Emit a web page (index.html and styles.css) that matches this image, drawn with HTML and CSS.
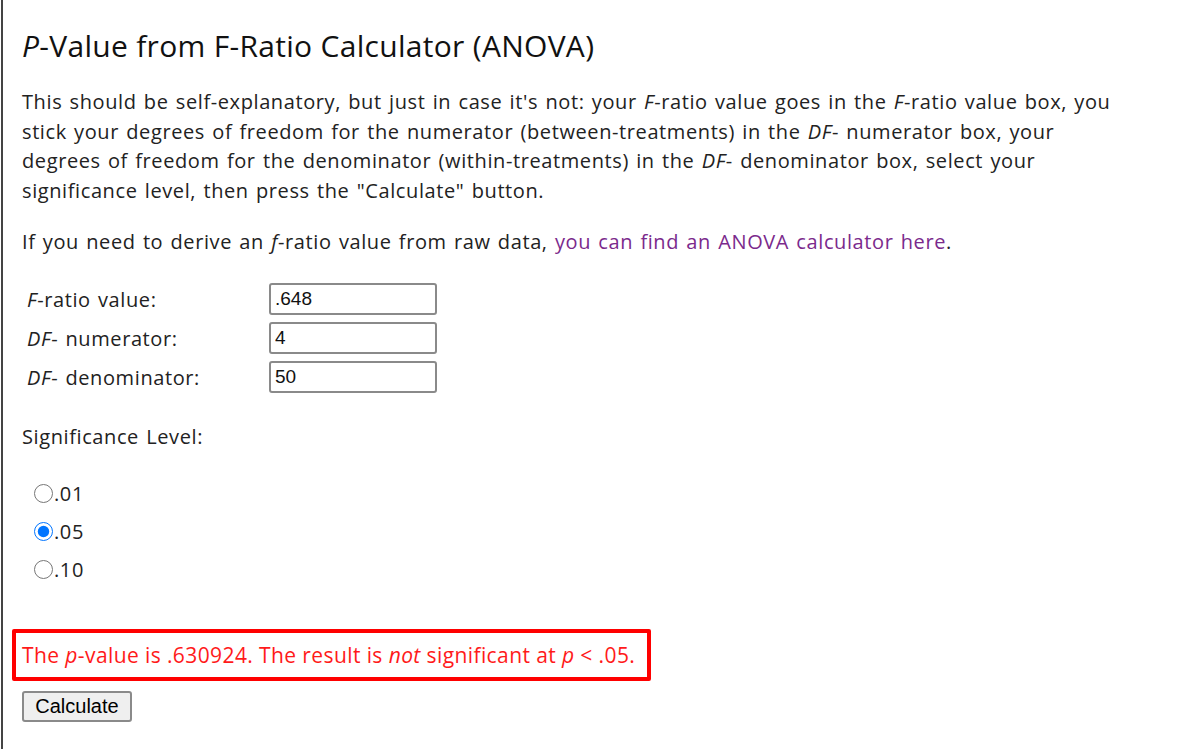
FILE: index.html
```html
<!DOCTYPE html>
<html lang="en">
<head>
    <meta charset="UTF-8">
    <title>P-Value from F-Ratio Calculator (ANOVA)</title>
    <link rel="stylesheet" href="styles.css">
</head>
<body>
    <div class="page">
        <h1 class="title"><i>P</i>-Value from F-Ratio Calculator (ANOVA)</h1>

        <p class="intro">This should be self-explanatory, but just in case it's not: your <i>F</i>-ratio value goes in the <i>F</i>-ratio value box, you stick your degrees of freedom for the numerator (between-treatments) in the <i>DF</i>- numerator box, your degrees of freedom for the denominator (within-treatments) in the <i>DF</i>- denominator box, select your significance level, then press the "Calculate" button.</p>

        <p class="intro">If you need to derive an <i>f</i>-ratio value from raw data, <a href="#" class="link">you can find an ANOVA calculator here</a>.</p>

        <form class="calc-form">
            <div class="fields">
                <label for="fratio"><i>F</i>-ratio value:</label>
                <input type="text" id="fratio" value=".648">
                <label for="dfn"><i>DF</i>- numerator:</label>
                <input type="text" id="dfn" value="4">
                <label for="dfd"><i>DF</i>- denominator:</label>
                <input type="text" id="dfd" value="50">
            </div>

            <p class="sig-title">Significance Level:</p>

            <div class="radios">
                <label class="radio"><input type="radio" name="sig" value=".01">.01</label>
                <label class="radio"><input type="radio" name="sig" value=".05" checked>.05</label>
                <label class="radio"><input type="radio" name="sig" value=".10">.10</label>
            </div>

            <div class="result">The <i>p</i>-value is .630924. The result is <i>not</i> significant at <i>p</i> &lt; .05.</div>

            <button type="button" class="calc-btn">Calculate</button>
        </form>
    </div>
</body>
</html>
```

FILE: styles.css
```css
body {
    margin: 0;
    background: #fff;
    font-family: 'Open Sans', sans-serif;
    color: #222;
}
.page {
    border-left: 2px solid #444;
    margin-left: 1px;
    min-height: 749px;
    padding: 25px 20px 0 19px;
    box-sizing: border-box;
}
.title {
    font-size: 30px;
    font-weight: 400;
    letter-spacing: 0.3px;
    margin: 0 0 21px 0;
    color: #111;
}
.intro {
    font-size: 20px;
    line-height: 29.5px;
    letter-spacing: 0.6px;
    word-spacing: 1.5px;
    margin: 0 0 22px 0;
    max-width: 1100px;
}
.link {
    color: #7b2a8c;
    text-decoration: none;
}
.fields {
    display: grid;
    grid-template-columns: 242px 168px;
    row-gap: 7px;
    align-items: center;
    margin-top: 26px;
    padding-left: 5px;
}
.fields label {
    font-size: 20px;
    letter-spacing: 0.6px;
    word-spacing: 1.5px;
    padding-top: 2px;
}
.fields input {
    font-family: 'Liberation Sans', Arial, sans-serif;
    font-size: 19px;
    height: 32px;
    box-sizing: border-box;
    border: 2px solid #8a8a8a;
    border-radius: 3px;
    padding: 2px 4px;
    color: #111;
}
.sig-title {
    font-size: 20px;
    letter-spacing: 0.6px;
    word-spacing: 1.5px;
    margin: 30px 0 30px 0;
}
.radios {
    display: flex;
    flex-direction: column;
    gap: 11px;
    padding-left: 12px;
}
.radio {
    font-size: 20px;
    letter-spacing: 0.6px;
    display: flex;
    align-items: center;
}
.radio input {
    width: 19px;
    height: 19px;
    margin: 0 1px 0 0;
}
.result {
    border: 4px solid #ff0000;
    border-radius: 2px;
    color: #ff1a1a;
    font-size: 21px;
    letter-spacing: 0.4px;
    margin: 46px 0 0 -10px;
    padding: 8px 6px 8px 6px;
    width: 639px;
    box-sizing: border-box;
    white-space: nowrap;
}
.calc-btn {
    font-family: 'Liberation Sans', Arial, sans-serif;
    font-size: 20px;
    margin-top: 10px;
    padding: 2px 10px;
    width: 110px;
    height: 31px;
    color: #000;
    background: #efefef;
    border: 2px solid #8a8a8a;
    border-radius: 3px;
}
```
